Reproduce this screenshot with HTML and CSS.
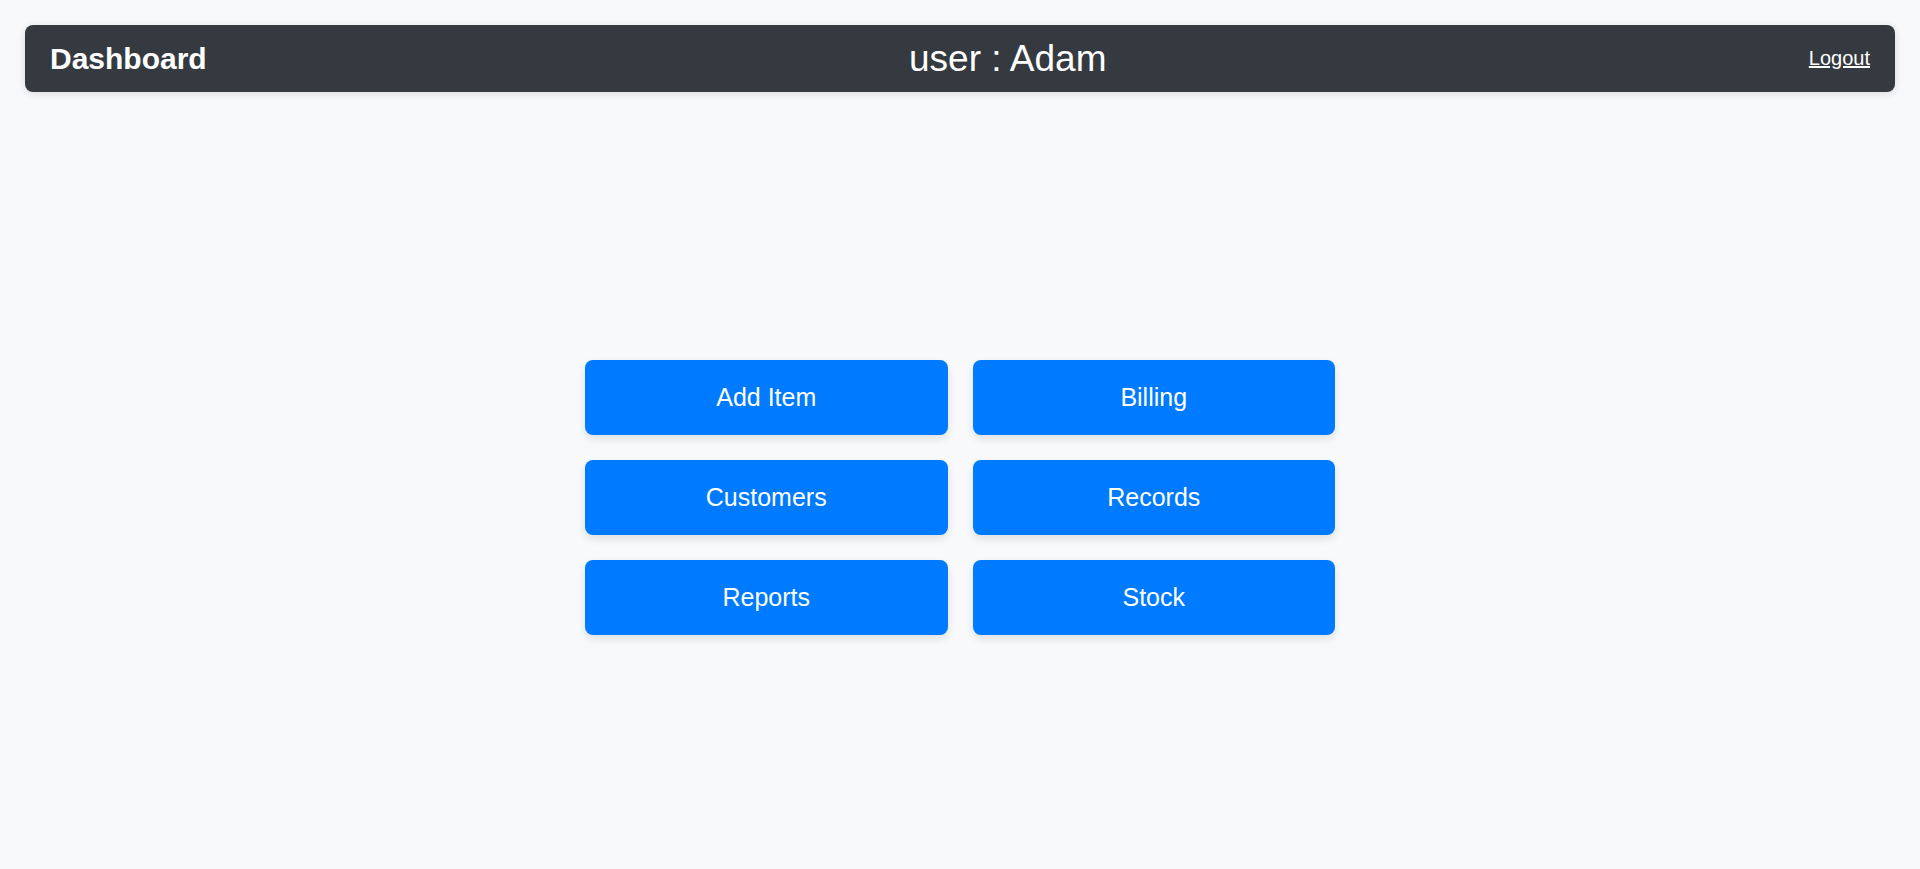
FILE: index.html
```html
<!DOCTYPE html>
<html lang="en">
<head>
<meta charset="utf-8">
<title>Dashboard</title>
<link rel="stylesheet" href="styles.css">
</head>
<body>
<header class="topbar">
  <div class="brand">Dashboard</div>
  <div class="user">user : Adam</div>
  <a class="logout" href="#">Logout</a>
</header>
<main class="main">
  <div class="grid">
    <button class="tile">Add Item</button>
    <button class="tile">Billing</button>
    <button class="tile">Customers</button>
    <button class="tile">Records</button>
    <button class="tile">Reports</button>
    <button class="tile">Stock</button>
  </div>
</main>
</body>
</html>
```

FILE: styles.css
```css
html, body {
  margin: 0;
  padding: 0;
}
body {
  background: #f8f9fa;
  font-family: "Liberation Sans", Arial, sans-serif;
  min-height: 100vh;
  padding: 25px;
  box-sizing: border-box;
}
.topbar {
  display: flex;
  justify-content: space-between;
  align-items: center;
  background: #343a40;
  color: #fff;
  border-radius: 8px;
  padding: 0 25px;
  height: 67px;
  box-sizing: border-box;
  box-shadow: 0 2px 8px rgba(0, 0, 0, 0.12);
}
.brand {
  font-size: 30px;
  font-weight: bold;
}
.user {
  font-size: 37px;
}
.logout {
  font-size: 20px;
  color: #fff;
  text-decoration: underline;
}
.main {
  display: flex;
  justify-content: center;
  padding-top: 268px;
}
.grid {
  display: grid;
  grid-template-columns: 362.5px 362.5px;
  grid-auto-rows: 75px;
  gap: 25px;
}
.tile {
  background: #007bff;
  color: #fff;
  border: none;
  border-radius: 8px;
  font-family: "Liberation Sans", Arial, sans-serif;
  font-size: 25px;
  box-shadow: 0 4px 8px rgba(0, 0, 0, 0.1);
  cursor: pointer;
}
```
